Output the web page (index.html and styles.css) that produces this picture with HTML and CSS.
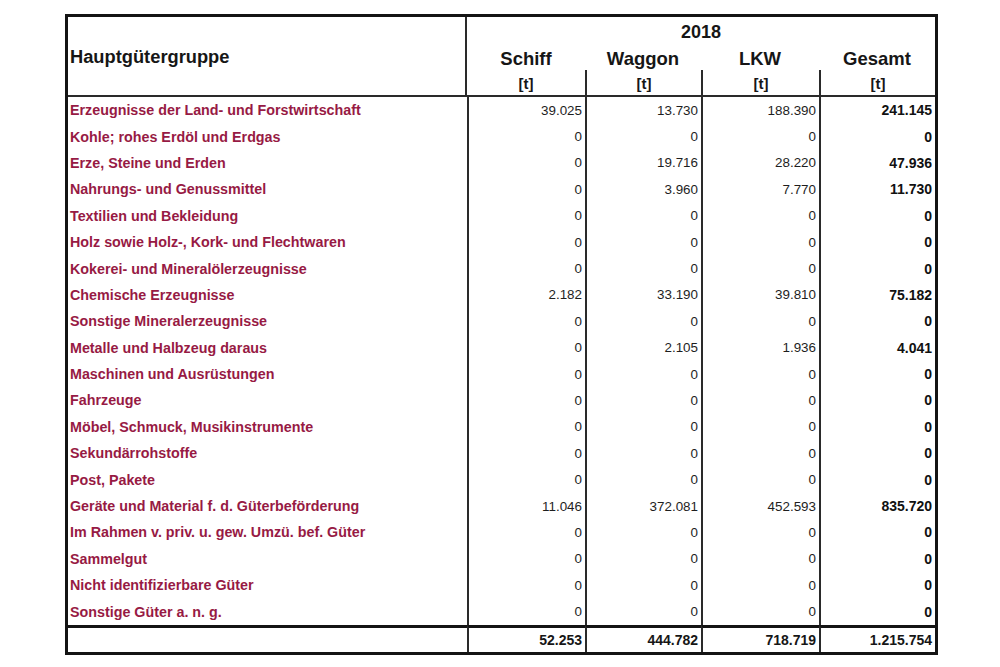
FILE: index.html
```html
<!DOCTYPE html>
<html lang="de">
<head>
<meta charset="utf-8">
<title>Hauptgütergruppe 2018</title>
<link rel="stylesheet" href="styles.css">
</head>
<body>
<table class="goods">
  <colgroup>
    <col class="c-label">
    <col class="c-schiff">
    <col class="c-waggon">
    <col class="c-lkw">
    <col class="c-gesamt">
  </colgroup>
  <thead>
    <tr class="h-year">
      <th class="h-group" rowspan="3">Hauptgütergruppe</th>
      <th class="year" colspan="4">2018</th>
    </tr>
    <tr class="h-names">
      <th>Schiff</th>
      <th>Waggon</th>
      <th>LKW</th>
      <th>Gesamt</th>
    </tr>
    <tr class="h-unit">
      <th class="unit">[t]</th>
      <th class="unit">[t]</th>
      <th class="unit">[t]</th>
      <th class="unit">[t]</th>
    </tr>
  </thead>
  <tbody>
    <tr><td class="label">Erzeugnisse der Land- und Forstwirtschaft</td><td class="num">39.025</td><td class="num">13.730</td><td class="num">188.390</td><td class="num total">241.145</td></tr>
    <tr><td class="label">Kohle; rohes Erdöl und Erdgas</td><td class="num">0</td><td class="num">0</td><td class="num">0</td><td class="num total">0</td></tr>
    <tr><td class="label">Erze, Steine und Erden</td><td class="num">0</td><td class="num">19.716</td><td class="num">28.220</td><td class="num total">47.936</td></tr>
    <tr><td class="label">Nahrungs- und Genussmittel</td><td class="num">0</td><td class="num">3.960</td><td class="num">7.770</td><td class="num total">11.730</td></tr>
    <tr><td class="label">Textilien und Bekleidung</td><td class="num">0</td><td class="num">0</td><td class="num">0</td><td class="num total">0</td></tr>
    <tr><td class="label">Holz sowie Holz-, Kork- und Flechtwaren</td><td class="num">0</td><td class="num">0</td><td class="num">0</td><td class="num total">0</td></tr>
    <tr><td class="label">Kokerei- und Mineralölerzeugnisse</td><td class="num">0</td><td class="num">0</td><td class="num">0</td><td class="num total">0</td></tr>
    <tr><td class="label">Chemische Erzeugnisse</td><td class="num">2.182</td><td class="num">33.190</td><td class="num">39.810</td><td class="num total">75.182</td></tr>
    <tr><td class="label">Sonstige Mineralerzeugnisse</td><td class="num">0</td><td class="num">0</td><td class="num">0</td><td class="num total">0</td></tr>
    <tr><td class="label">Metalle und Halbzeug daraus</td><td class="num">0</td><td class="num">2.105</td><td class="num">1.936</td><td class="num total">4.041</td></tr>
    <tr><td class="label">Maschinen und Ausrüstungen</td><td class="num">0</td><td class="num">0</td><td class="num">0</td><td class="num total">0</td></tr>
    <tr><td class="label">Fahrzeuge</td><td class="num">0</td><td class="num">0</td><td class="num">0</td><td class="num total">0</td></tr>
    <tr><td class="label">Möbel, Schmuck, Musikinstrumente</td><td class="num">0</td><td class="num">0</td><td class="num">0</td><td class="num total">0</td></tr>
    <tr><td class="label">Sekundärrohstoffe</td><td class="num">0</td><td class="num">0</td><td class="num">0</td><td class="num total">0</td></tr>
    <tr><td class="label">Post, Pakete</td><td class="num">0</td><td class="num">0</td><td class="num">0</td><td class="num total">0</td></tr>
    <tr><td class="label">Geräte und Material f. d. Güterbeförderung</td><td class="num">11.046</td><td class="num">372.081</td><td class="num">452.593</td><td class="num total">835.720</td></tr>
    <tr><td class="label">Im Rahmen v. priv. u. gew. Umzü. bef. Güter</td><td class="num">0</td><td class="num">0</td><td class="num">0</td><td class="num total">0</td></tr>
    <tr><td class="label">Sammelgut</td><td class="num">0</td><td class="num">0</td><td class="num">0</td><td class="num total">0</td></tr>
    <tr><td class="label">Nicht identifizierbare Güter</td><td class="num">0</td><td class="num">0</td><td class="num">0</td><td class="num total">0</td></tr>
    <tr><td class="label">Sonstige Güter a. n. g.</td><td class="num">0</td><td class="num">0</td><td class="num">0</td><td class="num total">0</td></tr>
  </tbody>
  <tfoot>
    <tr class="sum-row"><td class="label"></td><td class="num sum">52.253</td><td class="num sum">444.782</td><td class="num sum">718.719</td><td class="num sum">1.215.754</td></tr>
  </tfoot>
</table>
</body>
</html>
```

FILE: styles.css
```css
html, body {
  margin: 0;
  padding: 0;
  background: #ffffff;
}

body {
  font-family: "Liberation Sans", Arial, sans-serif;
  color: #1a1a1a;
  padding: 14px 0 0 65px;
}

.goods {
  box-sizing: border-box;
  width: 873px;
  table-layout: fixed;
  border-collapse: separate;
  border-spacing: 0;
  border: 3px solid #141414;
}

.c-label { width: 399px; }
.c-schiff { width: 118px; }
.c-waggon { width: 116px; }
.c-lkw { width: 118px; }
.c-gesamt { width: 116px; }

.goods th,
.goods td {
  padding: 0;
  box-sizing: border-box;
}

.goods th {
  font-weight: bold;
  font-size: 18.5px;
  color: #161616;
  text-align: center;
  vertical-align: middle;
}

.goods th.h-group {
  text-align: left;
  font-size: 18.3px;
  padding-left: 2px;
  padding-top: 2px;
  border-bottom: 2px solid #2a2a2a;
  border-right: 2px solid #2a2a2a;
}

.h-year { height: 29px; }
.goods th.year { padding-top: 2px; font-size: 18px; }
.h-names { height: 24px; }
.h-unit { height: 27px; }

.h-names th {
  vertical-align: top;
  padding-top: 2px;
}

.goods th.unit {
  font-size: 15px;
  border-bottom: 2px solid #2a2a2a;
  vertical-align: middle;
  padding-top: 1px;
}

.h-unit th + th {
  border-left: 2px solid #2a2a2a;
}

.goods tbody tr {
  height: 26.4px;
}

.goods td.label {
  color: #971a44;
  font-weight: bold;
  font-size: 14.3px;
  padding-left: 2px;
  text-align: left;
  white-space: nowrap;
  vertical-align: middle;
}

.goods td.num {
  border-left: 2px solid #2a2a2a;
  text-align: right;
  font-size: 13.4px;
  color: #1e1e1e;
  padding-right: 3px;
  vertical-align: middle;
}

.goods td.num.total {
  font-weight: bold;
  font-size: 14px;
  color: #111;
}

.sum-row {
  height: 27px;
}

.sum-row td {
  border-top: 3px solid #141414;
}

.goods td.num.sum {
  font-weight: bold;
  font-size: 14px;
  color: #161616;
  padding-top: 1px;
}
```
